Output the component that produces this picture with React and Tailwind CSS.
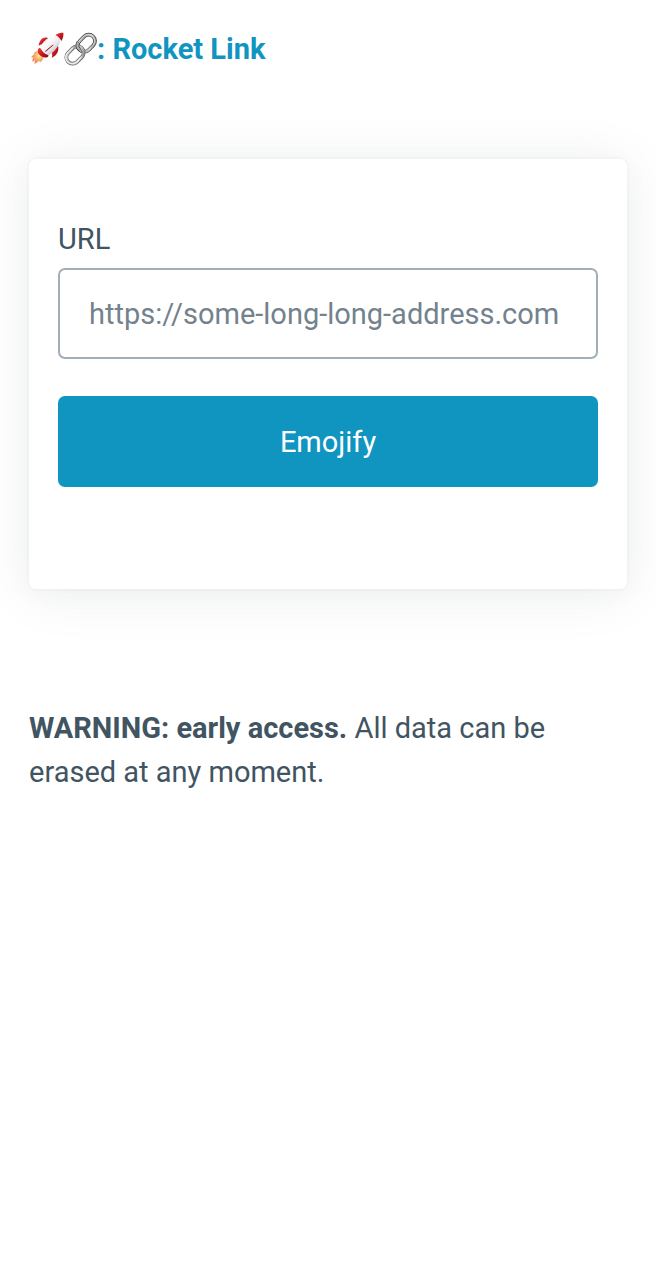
function RocketIcon() {
  return (
    <svg viewBox="33 36 99 99" className="h-[33px] w-[33px]" aria-hidden="true">
      <defs>
        <linearGradient id="hull" x1="0" y1="0" x2="1" y2="1">
          <stop offset="0" stopColor="#b9b9be" />
          <stop offset="0.35" stopColor="#ffffff" />
          <stop offset="0.6" stopColor="#e9e9ec" />
          <stop offset="1" stopColor="#8a8a91" />
        </linearGradient>
        <linearGradient id="red" x1="0" y1="0" x2="1" y2="1">
          <stop offset="0" stopColor="#ea4a48" />
          <stop offset="0.45" stopColor="#d01a20" />
          <stop offset="1" stopColor="#850910" />
        </linearGradient>
        <radialGradient id="flame" cx="0.65" cy="0.35" r="0.65">
          <stop offset="0" stopColor="#fff0a8" />
          <stop offset="0.45" stopColor="#f9b568" />
          <stop offset="1" stopColor="#ec8566" />
        </radialGradient>
      </defs>
      <path d="M56 93C48 93 43 96 41 101L45 101C39 104 34 109 34 113L40 112C37 117 37 122 38 126L45 121L43 131C50 129 54 126 56 122L61 127C67 122 71 117 70 109Z" fill="url(#flame)" />
      <path d="M82 53C69 49 58 60 56 77C61 73 67 73 74 75L92 58Z" fill="url(#red)" />
      <path d="M114 76C118 94 111 106 95 114C98 107 97 100 93 95Z" fill="url(#red)" />
      <path d="M108 45C86 48 66 66 57 87C61 99 70 107 82 108C101 98 117 79 122 59C119 52 115 48 108 45Z" fill="url(#hull)" />
      <path d="M106 45C113 39 121 38 130 38C131 47 129 55 124 63C120 55 114 49 106 45Z" fill="url(#red)" />
      <path d="M58 83C51 88 53 96 57 103C63 111 74 115 83 111C86 109 86 106 84 105C74 101 66 95 63 86Z" fill="url(#red)" />
      <path d="M77 93L98 75" stroke="#9a2229" strokeWidth="4" strokeLinecap="round" />
      <path d="M76 91L99 72" stroke="#f4f4f5" strokeWidth="3" strokeLinecap="round" />
    </svg>
  );
}

function LinkIcon() {
  return (
    <svg viewBox="132 36 99 102" className="h-[34px] w-[33px]" aria-hidden="true">
      <defs>
        <linearGradient id="steel" x1="0" y1="0" x2="1" y2="1">
          <stop offset="0" stopColor="#dcdcdd" />
          <stop offset="0.4" stopColor="#a4a4a6" />
          <stop offset="0.7" stopColor="#d2d2d4" />
          <stop offset="1" stopColor="#77777a" />
        </linearGradient>
      </defs>
      <g fill="none">
        <g transform="rotate(-45 199 70)">
          <rect x="171" y="51" width="57" height="38" rx="19" stroke="#3c3c3f" strokeWidth="11" />
          <rect x="171" y="51" width="57" height="38" rx="19" stroke="url(#steel)" strokeWidth="7" />
          <path d="M190 50H209C220 50 227 58 227 69S220 88 209 88" stroke="#e9e9ea" strokeWidth="2" />
        </g>
        <g transform="rotate(-45 165 105)">
          <rect x="136" y="86" width="58" height="38" rx="19" stroke="#5a5a5d" strokeWidth="11" />
          <rect x="136" y="86" width="58" height="38" rx="19" stroke="url(#steel)" strokeWidth="8" />
          <path d="M176 85H154C143 85 135 93 135 104S143 123 154 123H176" stroke="#f4f4f4" strokeWidth="3" />
        </g>
        <path d="M175 67C170 75 172 84 179 89" stroke="#3c3c3f" strokeWidth="11" />
        <path d="M175 67C170 75 172 84 179 89" stroke="#b0b0b3" strokeWidth="7" />
      </g>
    </svg>
  );
}

export default function App() {
  return (
    <div className="min-h-screen bg-white px-[29px] pt-[27px] font-['Roboto',sans-serif] text-[29px] leading-[44px] text-[#415462]">
      <header>
        <a href="/" className="flex items-center font-bold text-[#1095c1]">
          <span className="flex pl-[2px]">
            <RocketIcon />
            <LinkIcon />
          </span>
          <span>: Rocket Link</span>
        </a>
      </header>
      <main>
        <form
          onSubmit={(event) => event.preventDefault()}
          className="mt-[88px] rounded-[7px] bg-white px-[29px] pt-[58px] pb-[102px] shadow-[0_4px_29px_rgba(27,40,60,0.03),0_4px_58px_rgba(27,40,60,0.07),0_0_0_2px_rgba(27,40,60,0.02)]"
        >
          <label htmlFor="url" className="block">
            URL
          </label>
          <input
            id="url"
            type="url"
            placeholder="https://some-long-long-address.com"
            className="mt-[7px] block h-[91px] w-full rounded-[7px] border-2 border-[#a2afb9] bg-white px-[29px] placeholder:text-[#73828c] placeholder:opacity-100"
          />
          <button type="submit" className="mt-[37px] block h-[91px] w-full rounded-[7px] bg-[#1095c1] text-white">
            Emojify
          </button>
        </form>
        <p className="mt-[117px]">
          <strong className="font-bold">WARNING: early access.</strong> All data can be erased at any moment.
        </p>
      </main>
    </div>
  );
}
